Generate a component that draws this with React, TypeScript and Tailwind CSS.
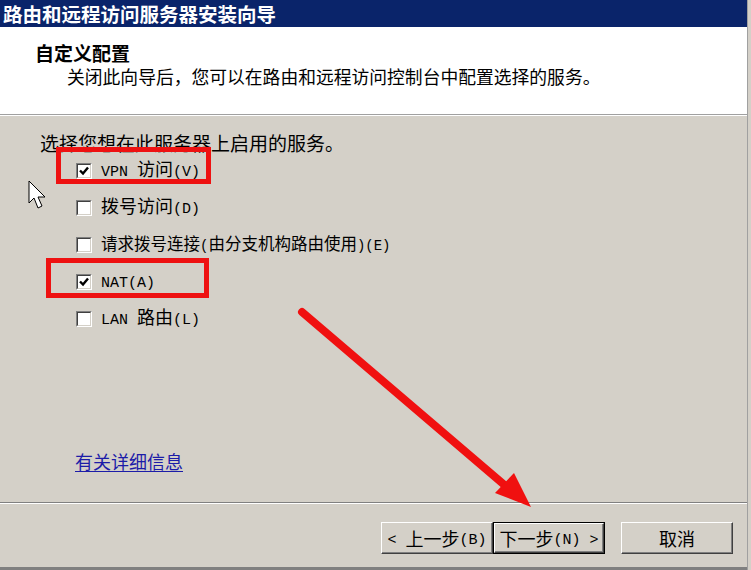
import React from "react";

const CJK = { fontFamily: '"Noto Sans CJK SC", "Noto Sans", sans-serif' };

function Lbl({ text, small }: { text: string; small?: boolean }) {
  const parts = text.split(/([\x20-\x7e]+)/).filter((p) => p.length > 0);
  return (
    <span className="whitespace-pre">
      {parts.map((p, i) =>
        /^[\x20-\x7e]+$/.test(p) ? (
          <span
            key={i}
            className={small ? "text-[14px]" : "text-[15px]"}
            style={{ fontFamily: '"Liberation Mono", monospace' }}
          >
            {p}
          </span>
        ) : (
          <span key={i}>{p}</span>
        )
      )}
    </span>
  );
}

function CheckBox({ checked }: { checked: boolean }) {
  return (
    <div className="w-[16px] h-[16px] border border-t-[#808080] border-l-[#808080] border-r-white border-b-white">
      <div className="w-full h-full bg-white border border-t-[#404040] border-l-[#404040] border-r-[#d4d0c8] border-b-[#d4d0c8] flex items-center justify-center">
        {checked && (
          <svg width="10" height="10" viewBox="0 0 10 10">
            <path d="M1 4.5 L4 7.5 L9 1.5" stroke="#000" strokeWidth="2.4" fill="none" />
          </svg>
        )}
      </div>
    </div>
  );
}

function Row({ checked, text, narrow }: { checked: boolean; text: string; narrow?: boolean }) {
  return (
    <div className="h-[37px] flex items-center pl-[76px] gap-[9px]">
      <CheckBox checked={checked} />
      <span className={narrow ? "text-[16.5px] leading-[20px] text-black" : "text-[18px] leading-[20px] text-black"}>
        <Lbl text={text} small={narrow} />
      </span>
    </div>
  );
}

function Btn({ children, isDefault }: { children: React.ReactNode; isDefault?: boolean }) {
  const inner = (
    <div className="w-full h-full bg-[#d4d0c8] border border-t-white border-l-white border-r-[#404040] border-b-[#404040] shadow-[inset_-1px_-1px_0_#808080] flex items-center justify-center text-[18px] leading-[20px] text-black">
      {children}
    </div>
  );
  if (isDefault) {
    return <div className="w-[112px] h-[32px] border border-black">{inner}</div>;
  }
  return <div className="w-[112px] h-[32px]">{inner}</div>;
}

export default function App() {
  return (
    <div className="relative w-[751px] h-[570px] overflow-hidden bg-[#d4d0c8] flex" style={CJK}>
      <div className="w-[747px] flex flex-col">
        {/* Title bar */}
        <div className="h-[27px] bg-[#0a246a] flex items-center pl-[3px] text-white font-bold text-[19.5px] leading-[20px]">
          路由和远程访问服务器安装向导
        </div>
        {/* Header */}
        <div className="h-[87px] bg-white flex flex-col pt-[15px]">
          <div className="pl-[35px] text-[19px] leading-[22px] font-bold text-black">自定义配置</div>
          <div className="pl-[67px] text-[17.8px] leading-[22px] text-black mt-[1px]">
            关闭此向导后，您可以在路由和远程访问控制台中配置选择的服务。
          </div>
        </div>
        <div className="h-[1px] bg-[#a0a0a0]" />
        <div className="h-[1px] bg-white" />
        {/* Body */}
        <div className="h-[386px] flex flex-col pt-[17px]">
          <div className="pl-[40px] text-[19px] leading-[20px] text-black">选择您想在此服务器上启用的服务。</div>
          <div className="flex flex-col mt-[-1px]">
            <Row checked text="VPN 访问(V)" />
            <Row checked={false} text="拨号访问(D)" />
            <Row checked={false} narrow text="请求拨号连接(由分支机构路由使用)(E)" />
            <Row checked text="NAT(A)" />
            <Row checked={false} text="LAN 路由(L)" />
          </div>
          <div className="pl-[75px] mt-[114px] text-[18px] leading-[20px]">
            <span className="text-[#1c1ca8] underline underline-offset-2">有关详细信息</span>
          </div>
        </div>
        <div className="h-[1px] bg-[#808080]" />
        <div className="h-[1px] bg-white" />
        {/* Footer */}
        <div className="flex-1 flex flex-col">
          <div className="flex-1 flex items-start pt-[18px] pl-[381px]">
            <Btn>
              <Lbl text="< " />
              上一步
              <Lbl text="(B)" />
            </Btn>
            <Btn isDefault>
              下一步
              <Lbl text="(N) >" />
            </Btn>
            <div className="w-[16px]" />
            <Btn>取消</Btn>
          </div>
          <div className="h-[3px] bg-[#808080]" />
        </div>
      </div>
      <div className="w-[4px] border-l border-[#a0a0a0] bg-[#d4d0c8]" />

      {/* Annotations */}
      <div className="absolute left-[56px] top-[147px] w-[155px] h-[37px] border-[5px] border-[#ee1111]" />
      <div className="absolute left-[46px] top-[258px] w-[163px] h-[40px] border-[5px] border-[#ee1111]" />
      <svg className="absolute left-0 top-0" width="751" height="570" viewBox="0 0 751 570">
        <line x1="302" y1="312" x2="508" y2="488" stroke="#f01010" strokeWidth="8" strokeLinecap="round" />
        <polygon points="495,493 514,473 531,507" fill="#f01010" />
        <path
          d="M29 181 L29 203 L34 198 L38 208 L42 206 L38 197 L45 197 Z"
          fill="#fff"
          stroke="#000"
          strokeWidth="1"
          strokeLinejoin="miter"
        />
      </svg>
    </div>
  );
}
